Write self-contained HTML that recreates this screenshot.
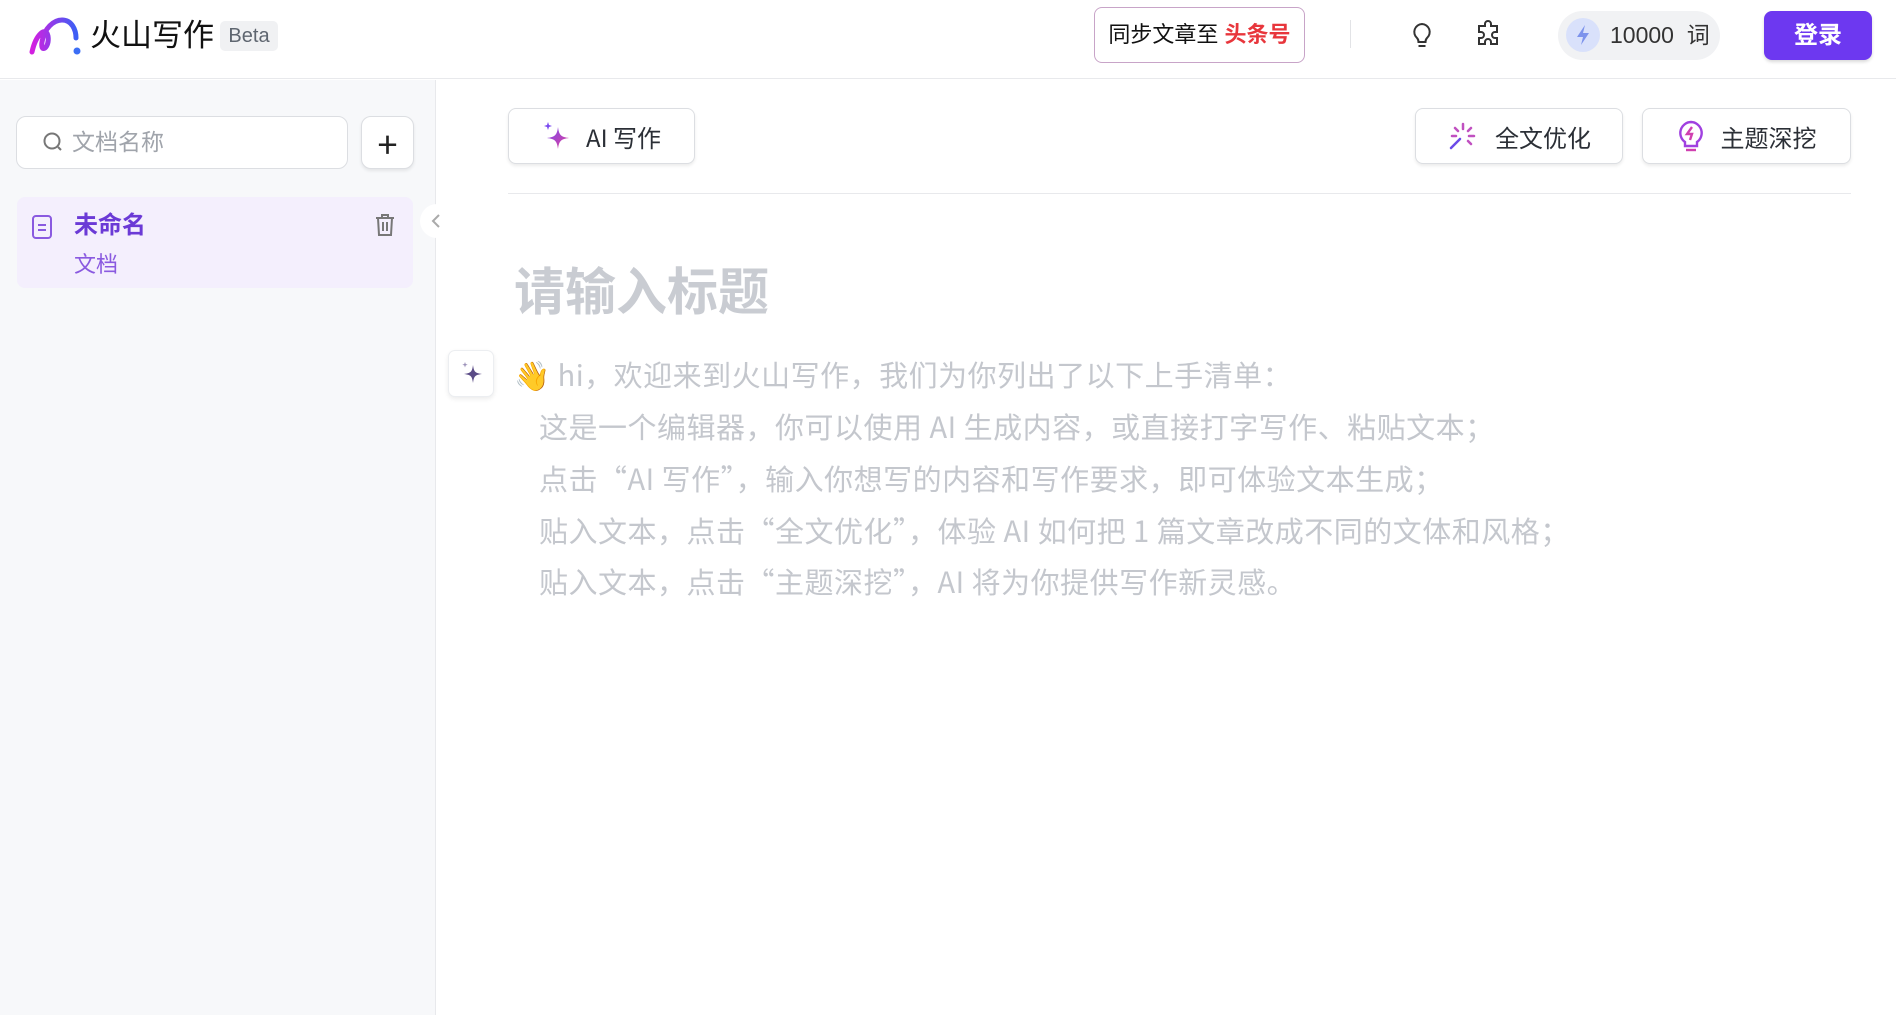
<!DOCTYPE html>
<html><head><meta charset="utf-8"><style>
*{box-sizing:border-box;margin:0;padding:0}
body{width:1896px;height:1015px;overflow:hidden;background:#fff;font-family:"Liberation Sans","Noto Sans CJK SC",sans-serif;position:relative;color:#1d2129}
.a{position:absolute}
.hdr{left:0;top:0;width:1896px;height:79px;border-bottom:1px solid #e8e9ec;background:#fff}
.side{left:0;top:80px;width:436px;height:935px;background:#f7f8fa;border-right:1px solid #e8e9ec}
.btn{background:#fff;border:1.5px solid #dcdee2;border-radius:8px;box-shadow:0 2px 3px rgba(0,0,0,.08);display:flex;align-items:center;justify-content:center;font-size:24px;color:#2b2f36;font-family:"Noto Sans CJK SC",sans-serif}
.txt{color:#c4c7cd;font-size:29px;line-height:51.5px;white-space:nowrap;font-family:"Noto Sans CJK SC",sans-serif;letter-spacing:0.5px}
</style></head><body>
<div class="a hdr"></div>
<svg class="a" style="left:28px;top:14px" width="56" height="42" viewBox="0 0 56 42"><defs><linearGradient id="g" x1="0" x2="1"><stop offset="0" stop-color="#d41fe0"/><stop offset="1" stop-color="#3c5ef5"/></linearGradient></defs><path d="M4 38 C8 20 18 12 20 22 C22 34 12 40 14 28 C16 14 26 6 34 6 C44 6 48 16 48 24" fill="none" stroke="url(#g)" stroke-width="5" stroke-linecap="round"/><circle cx="49" cy="37" r="3.5" fill="#3c6ef5"/></svg>
<div class="a" style="left:90px;top:16px;font-size:31px;color:#111;line-height:40px">火山写作</div>
<div class="a" style="left:220px;top:21px;width:58px;height:30px;background:#f0f1f3;border-radius:5px;font-size:20px;color:#5f6670;line-height:30px;text-align:center">Beta</div>
<div class="a" style="left:1094px;top:7px;width:211px;height:56px;border:1.5px solid #c8a4c8;border-radius:8px;font-size:22px;line-height:53px;text-align:center;color:#111">同步文章至 <b style="color:#e8363c">头条号</b></div>
<div class="a" style="left:1350px;top:20px;width:1px;height:28px;background:#e2e3e6"></div>
<svg class="a" style="left:1410px;top:22px" width="24" height="28" viewBox="0 0 24 28" fill="none" stroke="#333" stroke-width="2"><path d="M12 2a8 8 0 0 0-5 14c1 1 1.5 2 1.5 4h7c0-2 .5-3 1.5-4a8 8 0 0 0-5-14z"/><path d="M8.5 24h7"/></svg>
<svg class="a" style="left:1475px;top:20px" width="28" height="30" viewBox="0 0 28 30" fill="none" stroke="#333" stroke-width="2"><path d="M10 4a3 3 0 0 1 6 0v2h6v6h-2a3 3 0 0 0 0 6h2v6h-6v-2a3 3 0 0 0-6 0v2H4v-6h2a3 3 0 0 0 0-6H4V6h6z"/></svg>
<div class="a" style="left:1558px;top:11px;width:162px;height:49px;background:#f1f2f4;border-radius:25px"></div>
<div class="a" style="left:1566px;top:18px;width:34px;height:34px;border-radius:50%;background:#d9e1fb"></div>
<svg class="a" style="left:1574px;top:24px" width="18" height="22" viewBox="0 0 18 22"><path d="M11 1L3 13h6l-2 8 8-12H9z" fill="#7d93ec"/></svg>
<div class="a" style="left:1610px;top:11px;line-height:49px;font-size:23px;color:#333">10000&nbsp; 词</div>
<div class="a" style="left:1764px;top:11px;width:108px;height:49px;background:#6d38f0;border-radius:8px;color:#fff;font-size:24px;font-weight:bold;line-height:49px;text-align:center;box-shadow:0 2px 3px rgba(0,0,0,.15)">登录</div>

<div class="a side"></div>
<div class="a" style="left:16px;top:116px;width:332px;height:53px;background:#fff;border:1.5px solid #dcdee2;border-radius:10px"></div>
<svg class="a" style="left:42px;top:131px" width="22" height="22" viewBox="0 0 22 22" fill="none" stroke="#777" stroke-width="2"><circle cx="10" cy="10" r="7.5"/><path d="M16 16l3 3"/></svg>
<div class="a" style="left:72px;top:116px;line-height:53px;font-size:23px;color:#a0a4ab">文档名称</div>
<div class="a btn" style="left:361px;top:116px;width:53px;height:53px;font-size:36px;border-radius:10px;color:#222">+</div>
<div class="a" style="left:17px;top:197px;width:396px;height:91px;background:#f4effd;border-radius:8px"></div>
<svg class="a" style="left:31px;top:214px" width="22" height="26" viewBox="0 0 22 26" fill="none" stroke="#8a5ae0" stroke-width="2"><rect x="2" y="2" width="18" height="22" rx="3"/><path d="M7 11h8M7 16h8"/></svg>
<div class="a" style="left:74px;top:210px;font-size:24px;color:#6b3ad6;font-weight:bold;line-height:32px">未命名</div>
<div class="a" style="left:74px;top:250px;font-size:22px;color:#8a5ae0;line-height:30px">文档</div>
<svg class="a" style="left:373px;top:212px" width="24" height="26" viewBox="0 0 24 26" fill="none" stroke="#777" stroke-width="2"><path d="M3 6h18M9 6V3h6v3M5 6l1 17h12l1-17M10 10v9M14 10v9"/></svg>
<div class="a" style="left:420px;top:204px;width:34px;height:34px;border-radius:50%;background:#fff"></div>
<svg class="a" style="left:430px;top:212px" width="12" height="18" viewBox="0 0 12 18" fill="none" stroke="#aaa" stroke-width="2"><path d="M9 3L3 9l6 6"/></svg>

<div class="a btn" style="left:508px;top:108px;width:187px;height:56px"><svg width="30" height="30" viewBox="0 0 30 30" style="margin-right:14px"><defs><linearGradient id="s" x1="0" y1="0" x2="1" y2="1"><stop offset="0" stop-color="#7a4af0"/><stop offset="1" stop-color="#e0409a"/></linearGradient></defs><path d="M16 6C17 14 19 16 27 17C19 18 17 20 16 28C15 20 13 18 5 17C13 16 15 14 16 6z" fill="url(#s)"/><path d="M6 1l1 3 3 1-3 1-1 3-1-3-3-1 3-1z" fill="#7a4af0"/></svg>AI 写作</div>
<div class="a btn" style="left:1415px;top:108px;width:208px;height:56px"><svg width="30" height="30" viewBox="0 0 30 30" style="margin-right:18px" stroke-width="2.5" stroke-linecap="round"><path d="M4 27l9-9" stroke="#6b4ae8"/><path d="M16 3v5M24 7l-3 3M27 15h-5M24 23l-3-3M8 7l3 3M5 15h4" stroke="#c050c0"/></svg>全文优化</div>
<div class="a btn" style="left:1642px;top:108px;width:209px;height:56px"><svg width="28" height="32" viewBox="0 0 28 32" fill="none" stroke-width="2.4" style="margin-right:16px"><path d="M14 2a11 11 0 0 0-6 20v4h12v-4a11 11 0 0 0-6-20z" stroke="#a040e0"/><path d="M15 7l-5 7h5l-2 6" stroke="#d040b0"/><path d="M9 30h10" stroke="#d040b0"/></svg>主题深挖</div>
<div class="a" style="left:508px;top:193px;width:1343px;height:1px;background:#e8e9ec"></div>

<div class="a" style="left:514px;top:255px;font-size:51px;font-weight:bold;color:#c9ccd2;line-height:66px;font-family:'Noto Sans CJK SC',sans-serif">请输入标题</div>
<div class="a" style="left:448px;top:350px;width:46px;height:47px;background:#fff;border:1px solid #eceef1;border-radius:7px;box-shadow:0 2px 5px rgba(0,0,0,.08)"></div>
<svg class="a" style="left:458px;top:359px" width="28" height="28" viewBox="0 0 28 28"><path d="M15 6C16 13 17 14 24 15C17 16 16 17 15 24C14 17 13 16 6 15C13 14 14 13 15 6z" fill="#5a4b86"/><path d="M7 3l.7 2 2 .7-2 .7L7 8.5 6.3 6.4 4.3 5.7l2-.7z" fill="#9a90b8"/></svg>
<div class="a txt" style="left:514px;top:349px">👋 hi，欢迎来到火山写作，我们为你列出了以下上手清单：</div>
<div class="a txt" style="left:539px;top:401px">这是一个编辑器，你可以使用 AI 生成内容，或直接打字写作、粘贴文本；</div>
<div class="a txt" style="left:539px;top:453px">点击“AI 写作”，输入你想写的内容和写作要求，即可体验文本生成；</div>
<div class="a txt" style="left:539px;top:505px">贴入文本，点击“全文优化”，体验 AI 如何把 1 篇文章改成不同的文体和风格；</div>
<div class="a txt" style="left:539px;top:556px">贴入文本，点击“主题深挖”，AI 将为你提供写作新灵感。</div>
</body></html>
